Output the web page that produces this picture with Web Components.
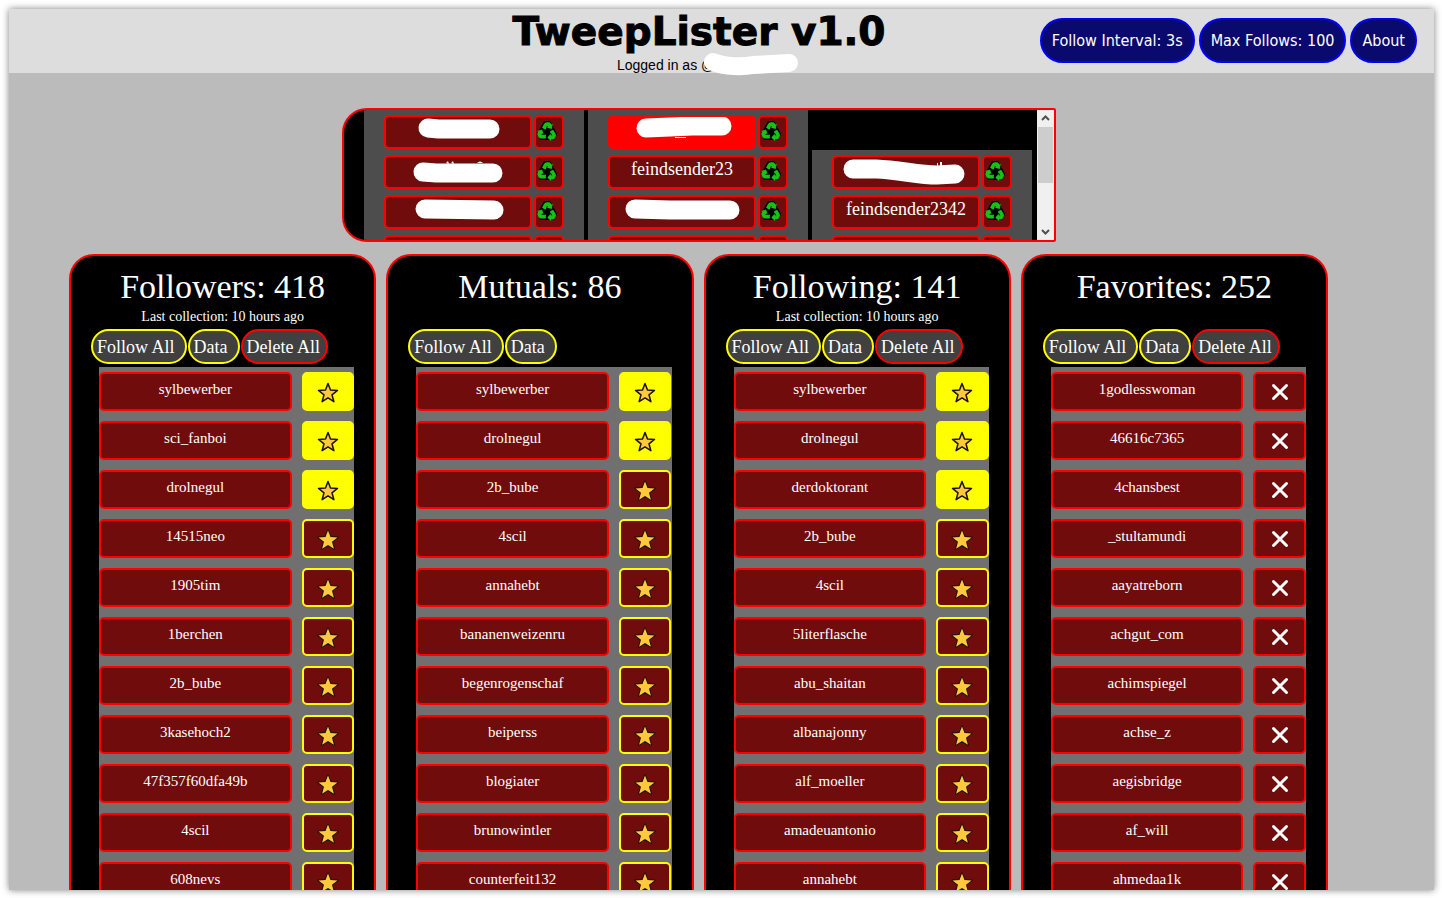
<!DOCTYPE html>
<html lang="en">
<head>
<meta charset="utf-8">
<title>TweepLister v1.0</title>
<style>
  body { margin: 0; background: #fff; font-family: "Liberation Serif", serif; }
</style>
</head>
<body>
<tweep-app></tweep-app>

<template id="t-app">
  <style>
    :host { display: flex; flex-direction: column; box-sizing: border-box; height: 100vh; padding: 9px 8px 8px 9px; overflow: hidden; }
    .frame { flex: 1; min-height: 0; overflow: hidden; background: #bbb; }
    .shade { display: flex; flex: 1; min-height: 0; flex-direction: column; box-shadow: 0 0 7px rgba(0, 0, 0, .5); }
    main { padding: 35px 45px 0 0; }
    .lists { display: grid; grid-template-columns: repeat(4, minmax(0, 1fr)); gap: 10px; padding: 0 61px 0 60px; margin-top: 12px; }
  </style>
  <div class="shade"><div class="frame">
    <top-bar></top-bar>
    <main>
      <account-panel></account-panel>
      <div class="lists"></div>
    </main>
  </div></div>
</template>

<template id="t-bar">
  <style>
    :host { display: grid; grid-template-columns: 1fr auto 1fr; height: 64px; padding-right: 45px; background: #ddd; color: #000; }
    .title { grid-column: 2; display: flex; flex-direction: column; align-items: center; }
    h1 { margin: 0; font: 900 39px/46px "DejaVu Sans", sans-serif; white-space: nowrap; -webkit-text-stroke: 1px #000; }
    p { display: flex; margin: 0; font: 14px/20px "Liberation Sans", sans-serif; white-space: pre; }
    .who { position: relative; width: 80px; }
    svg { position: absolute; left: 2px; top: -3px; }
    nav { display: flex; gap: 4px; justify-self: end; align-self: start; margin: 9px -28px 0 0; }
  </style>
  <div class="title">
    <h1>TweepLister v1.0</h1>
    <p>Logged in as <span class="who">@<svg width="96" height="26" aria-hidden="true"><path fill="none" stroke="#fff" stroke-width="18" stroke-linecap="round" d="M10 10C22 15 40 15 50 13L86 11"/></svg></span></p>
  </div>
  <nav>
    <pill-button kind="nav">Follow Interval: 3s</pill-button>
    <pill-button kind="nav">Max Follows: 100</pill-button>
    <pill-button kind="nav">About</pill-button>
  </nav>
</template>

<template id="t-pill">
  <style>
    :host { display: block; }
    button { display: block; height: 35px; padding: 0 10px 0 4px; border: 2px solid #ff0; border-radius: 18px; background: #404040; color: #fff; font: 18px/32px "Liberation Serif", serif; white-space: nowrap; cursor: pointer; }
    :host([kind="danger"]) button { padding-right: 6px; border-color: red; }
    :host([kind="nav"]) button { height: 45px; padding: 1px 10px 0; border-color: #00f; border-radius: 23px; background: #0a0a6e; font: 16px/40px "DejaVu Sans Condensed", "Noto Sans", sans-serif; }
  </style>
  <button type="button"><slot></slot></button>
</template>

<template id="t-panel">
  <style>
    :host { display: flex; box-sizing: border-box; width: fit-content; height: 134px; margin: 0 auto; border: 2px solid red; border-radius: 25px 2px 2px 25px; background: #000; overflow: hidden; }
    .groups { display: flex; align-items: flex-end; align-self: flex-start; gap: 4px; padding: 0 5px 0 20px; }
    .group { display: flex; flex-direction: column; gap: 6px; padding: 5px 20px; background: #4d4d4d; }
    .bar { display: flex; flex-direction: column; width: 17px; background: #f0f0f0; }
    .bar svg { display: block; flex: none; }
    .thumb { width: 15px; height: 56px; margin: 0 auto auto; background: #cdcdcd; }
  </style>
  <div class="groups">
    <div class="group">
      <account-chip mark="M42 11L52 12H104"></account-chip>
      <account-chip mark="M37 15L50 16H107" hint="M60 6l2-2 1 3zM65 6l2-2 1 3zM91 6q3-3 6 0z"></account-chip>
      <account-chip mark="M39 12L108 13"></account-chip>
      <account-chip></account-chip>
    </div>
    <div class="group">
      <account-chip active mark="M36 11L60 10L82 9H112" hint="M65 20h11v1H65z"></account-chip>
      <account-chip>feindsender23</account-chip>
      <account-chip mark="M25 12L60 13H120"></account-chip>
      <account-chip></account-chip>
    </div>
    <div class="group">
      <account-chip mark="M19 12H42C66 13 84 18 103 18L121 17" hint="M103 6h1v3h-1zM106 5h2v4h-2z"></account-chip>
      <account-chip>feindsender2342</account-chip>
      <account-chip></account-chip>
    </div>
  </div>
  <div class="bar" aria-hidden="true">
    <svg width="17" height="17"><path d="M5 10l3.500-3.500L12 10" fill="none" stroke="#505050" stroke-width="2"/></svg>
    <div class="thumb"></div>
    <svg width="17" height="17"><path d="M5 7l3.500 3.500L12 7" fill="none" stroke="#505050" stroke-width="2"/></svg>
  </div>
</template>

<template id="t-chip">
  <style>
    :host { display: grid; grid-template-columns: 148px 30px; gap: 2px; height: 34px; }
    button { display: block; position: relative; min-width: 0; padding: 0 0 6px; border: 2px solid red; border-radius: 5px; background: #700c0c; color: #fff; font: 18px/24px "Liberation Serif", serif; cursor: pointer; }
    :host([active]) .name { background: red; }
    .recycle { padding: 0 4px 2px 0; }
    svg { display: block; margin: auto; }
    .mark { position: absolute; left: 0; top: 0; }
  </style>
  <button type="button" class="name"><slot></slot></button>
  <button type="button" class="recycle" aria-label="Renew account">
    <svg width="20" height="20" viewBox="0 0 20 20">
      <g fill="#000" stroke="#000" stroke-width="3" stroke-linejoin="round">
        <path d="M5 7L7.500 1.800h5L15 7l3.500 6-2.500 4.500H4L1.500 13z"/>
      </g>
      <g fill="#14c414">
        <path d="M5 6.800L7 3Q8 1.200 10 1.200h1.800q1.400 0 2 1.200l.7 1.200 1.300-.6-1.200 5-4.900-1.200 1.300-.8-.8-1.300L8.400 8.800z"/>
        <path d="M5 6.800L7 3Q8 1.200 10 1.200h1.800q1.400 0 2 1.200l.7 1.200 1.300-.6-1.200 5-4.900-1.200 1.300-.8-.8-1.300L8.400 8.800z" transform="rotate(120 10 11)"/>
        <path d="M5 6.800L7 3Q8 1.200 10 1.200h1.800q1.400 0 2 1.200l.7 1.200 1.300-.6-1.200 5-4.900-1.200 1.300-.8-.8-1.300L8.400 8.800z" transform="rotate(240 10 11)"/>
      </g>
    </svg>
  </button>
</template>

<template id="t-column">
  <style>
    :host { display: block; box-sizing: border-box; padding: 11px 20px 0; border: 2px solid red; border-radius: 25px 25px 0 0; background: #000; color: #fff; }
    h2 { margin: 0; font: 34px/40px "Liberation Serif", serif; text-align: center; white-space: nowrap; }
    p { height: 18px; margin: 1px 0 3px; font-size: 14px; line-height: 18px; text-align: center; }
    .actions { display: flex; gap: 1px; }
    .rows { display: flex; flex-direction: column; gap: 10px; margin: 3px 0 0 8px; padding: 5px 0; background: #707070; }
  </style>
  <h2></h2>
  <p></p>
  <div class="actions">
    <pill-button>Follow All</pill-button>
    <pill-button>Data</pill-button>
  </div>
  <div class="rows"></div>
</template>

<template id="t-row">
  <style>
    :host { display: grid; grid-template-columns: minmax(0, 11fr) minmax(0, 3fr); gap: 10px; height: 39px; }
    button { display: block; min-width: 0; padding: 0 0 5px; border: 2px solid red; border-radius: 5px; background: #700c0c; color: #fff; font: 15px/30px "Liberation Serif", serif; cursor: pointer; }
    .mark { padding: 1px 0 0; }
    :host([mark="star"]) .mark, :host([mark="new"]) .mark { padding-top: 3px; border-color: #ff0; }
    :host([mark="new"]) .mark { background: #ff0; }
    svg { display: block; margin: auto; }
    .star path { fill: #ffc83d; stroke: #1a1208; stroke-width: 1.500; stroke-linejoin: round; }
    :host([mark="star"]) .star path { stroke-width: 2; paint-order: stroke; }
    .cross path { fill: none; stroke: #fff; stroke-width: 3; stroke-linecap: round; }
  </style>
  <button type="button" class="name"><slot></slot></button>
  <button type="button" class="mark"></button>
</template>

<script>
  class Base extends HTMLElement {
    constructor() {
      super();
      this.attachShadow({ mode: "open" })
        .append(document.getElementById(this.constructor.template).content.cloneNode(true));
    }
    $(selector) { return this.shadowRoot.querySelector(selector); }
  }

  const STAR = '<svg class="star" width="22" height="22" viewBox="0 0 22 22"><path d="M11 1.500l2.500 6.600 7 .3-5.500 4.400 1.900 6.900L11 15.900l-5.900 3.800L7 12.800 1.500 8.400l7-.3z"/></svg>';
  const CROSS = '<svg class="cross" width="22" height="22" viewBox="0 0 22 22"><path d="M4.500 4.500l13 13M17.500 4.500l-13 13"/></svg>';

  class PillButton extends Base { static template = "t-pill"; }
  class TopBar extends Base { static template = "t-bar"; }
  class AccountPanel extends Base { static template = "t-panel"; }

  class AccountChip extends Base {
    static template = "t-chip";
    connectedCallback() {
      const mark = this.getAttribute("mark");
      const hint = this.getAttribute("hint") || "";
      if (!this.textContent) this.$(".name").setAttribute("aria-label", "Hidden account");
      if (mark) this.$(".name").insertAdjacentHTML("beforeend",
        `<svg class="mark" width="144" height="30" aria-hidden="true"><path fill="none" stroke="#fff" stroke-width="19" stroke-linecap="round" d="${mark}"/><path fill="#fff" d="${hint}"/></svg>`);
    }
  }

  class TweepRow extends Base {
    static template = "t-row";
    connectedCallback() {
      const cross = this.getAttribute("mark") === "cross";
      this.$(".mark").innerHTML = cross ? CROSS : STAR;
      this.$(".mark").setAttribute("aria-label", cross ? "Remove" : "Favorite");
    }
  }

  class TweepColumn extends Base {
    static template = "t-column";
    set data({ title, note = "", fresh = 0, cross, deletable, names }) {
      this.$("h2").textContent = title;
      this.$("p").textContent = note;
      if (deletable) {
        const pill = document.createElement("pill-button");
        pill.setAttribute("kind", "danger");
        pill.textContent = "Delete All";
        this.$(".actions").append(pill);
      }
      names.split(" ").forEach((name, i) => {
        const row = document.createElement("tweep-row");
        row.setAttribute("mark", cross ? "cross" : i < fresh ? "new" : "star");
        row.textContent = name;
        this.$(".rows").append(row);
      });
    }
  }

  class TweepApp extends Base {
    static template = "t-app";
    connectedCallback() {
      const note = "Last collection: 10 hours ago";
      [
        { title: "Followers: 418", note, fresh: 3, deletable: true,
          names: "sylbewerber sci_fanboi drolnegul 14515neo 1905tim 1berchen 2b_bube 3kasehoch2 47f357f60dfa49b 4scil 608nevs" },
        { title: "Mutuals: 86", fresh: 2,
          names: "sylbewerber drolnegul 2b_bube 4scil annahebt bananenweizenru begenrogenschaf beiperss blogiater brunowintler counterfeit132" },
        { title: "Following: 141", note, fresh: 3, deletable: true,
          names: "sylbewerber drolnegul derdoktorant 2b_bube 4scil 5literflasche abu_shaitan albanajonny alf_moeller amadeuantonio annahebt" },
        { title: "Favorites: 252", cross: true, deletable: true,
          names: "1godlesswoman 46616c7365 4chansbest _stultamundi aayatreborn achgut_com achimspiegel achse_z aegisbridge af_will ahmedaa1k" }
      ].forEach(data => {
        const column = document.createElement("tweep-column");
        column.data = data;
        this.$(".lists").append(column);
      });
    }
  }

  customElements.define("pill-button", PillButton);
  customElements.define("top-bar", TopBar);
  customElements.define("account-chip", AccountChip);
  customElements.define("account-panel", AccountPanel);
  customElements.define("tweep-row", TweepRow);
  customElements.define("tweep-column", TweepColumn);
  customElements.define("tweep-app", TweepApp);
</script>
</body>
</html>
